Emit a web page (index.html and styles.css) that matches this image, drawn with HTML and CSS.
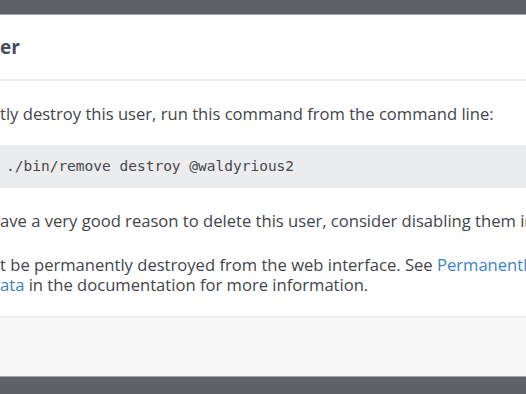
FILE: index.html
```html
<!DOCTYPE html>
<html lang="en">
<head>
    <meta charset="UTF-8">
    <title>Delete User</title>
    <link rel="stylesheet" href="styles.css">
</head>
<body>
    <div class="backdrop">
        <div class="dialog">
            <div class="dialog-header">
                <h1>er</h1>
            </div>
            <div class="dialog-body">
                <p>tly destroy this user, run this command from the command line:</p>
                <pre class="command">./bin/remove destroy @waldyrious2</pre>
                <p>ave a very good reason to delete this user, consider disabling them instead.</p>
                <p>t be permanently destroyed from the web interface. See <a href="#">Permanently</a><br><a href="#">ata</a> in the documentation for more information.</p>
            </div>
            <div class="dialog-footer"></div>
        </div>
    </div>
</body>
</html>
```

FILE: styles.css
```css
* {
    margin: 0;
    padding: 0;
    box-sizing: border-box;
}

body {
    height: 394px;
    overflow: hidden;
    background: #5e6266;
    font-family: 'Open Sans', sans-serif;
}

.backdrop {
    padding-top: 14px;
}

.dialog {
    background: #fff;
    border-top: 1px solid #a4a8ac;
    border-bottom: 1px solid #a4a8ac;
}

.dialog-header {
    height: 66px;
    display: flex;
    align-items: center;
    border-bottom: 2px solid #eaeef3;
}

.dialog-header h1 {
    font-size: 19px;
    font-weight: 700;
    color: #464c5c;
}

.dialog-body {
    padding: 23px 0 21px;
    color: #43454a;
    font-size: 16.6px;
    line-height: 20px;
    white-space: nowrap;
    overflow: hidden;
}

.dialog-body p + p {
    margin-top: 24px;
}

.command {
    margin: 21px 0 23px;
    padding: 12px 6px;
    background: #ebecee;
    font-family: 'DejaVu Sans Mono', monospace;
    font-size: 14.5px;
    line-height: 19px;
    color: #46484c;
}

.dialog-body a {
    color: #3a83cc;
    text-decoration: none;
}

.dialog-footer {
    height: 60px;
    background: #f7f7f7;
    border-top: 2px solid #eaeef3;
}
```
